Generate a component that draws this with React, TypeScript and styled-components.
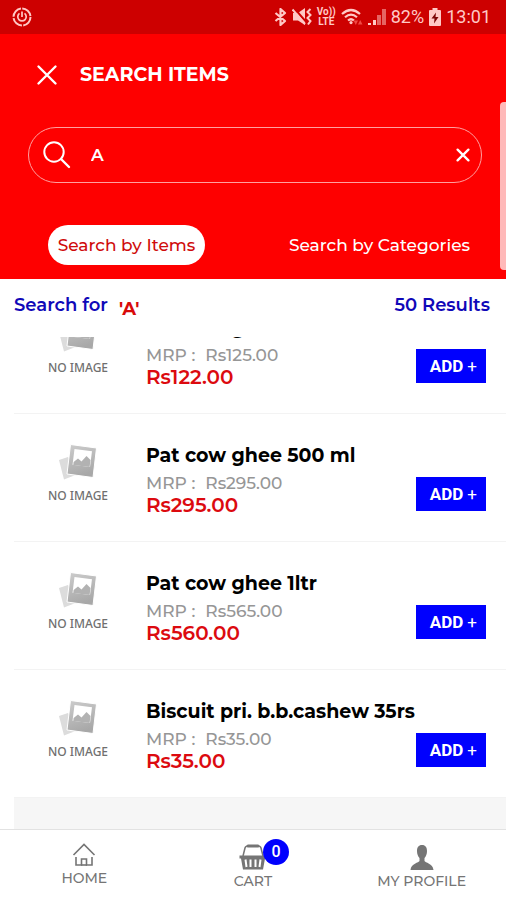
import React, { useState } from 'react';
import styled, { createGlobalStyle } from 'styled-components';

const GlobalStyle = createGlobalStyle`
  *, *::before, *::after { box-sizing: border-box; }
  html, body, #root { height: 100%; }
  body {
    margin: 0;
    background: #fff;
    color: #000;
    font-family: Montserrat, Inter, sans-serif;
  }
  button, input { font-family: inherit; }
`;

const Page = styled.div`
  position: relative;
  display: flex;
  flex-direction: column;
  height: 100%;
  overflow: hidden;
`;

const ScrollThumb = styled.div`
  position: absolute;
  top: 102px;
  right: 0;
  width: 6px;
  height: 168px;
  border-radius: 4px 0 0 4px;
  background: #ffb9b9;
`;

const StatusBar = styled.div`
  flex: none;
  display: flex;
  align-items: center;
  justify-content: space-between;
  height: 34px;
  padding: 0 15px 0 12px;
  background: #cd0000;
  color: #ffc9c6;
  font-family: Roboto, sans-serif;
  font-size: 18px;
  line-height: 24px;
`;

const StatusGroup = styled.div`
  display: flex;
  align-items: center;
  gap: 5px;
`;

const VoLte = styled.span`
  display: flex;
  flex-direction: column;
  align-items: center;
  font-size: 10px;
  font-weight: 700;
  line-height: 10px;
`;

const Header = styled.header`
  flex: none;
  padding: 29px 0 14px;
  background: #fe0000;
  color: #fff;
`;

const TitleRow = styled.div`
  display: flex;
  align-items: center;
  gap: 22px;
  padding: 0 36px;
`;

const IconButton = styled.button`
  display: flex;
  padding: 0;
  border: 0;
  background: none;
  color: inherit;
  cursor: pointer;
`;

const Title = styled.h1`
  margin: 0;
  font-size: 19px;
  font-weight: 700;
  line-height: 24px;
`;

const SearchBox = styled.form`
  display: flex;
  align-items: center;
  height: 56px;
  margin: 40px 24px 0 28px;
  padding: 0 11px 0 14px;
  border: 1px solid #ffa0a0;
  border-radius: 28px;
`;

const SearchInput = styled.input`
  flex: 1;
  min-width: 0;
  padding: 0 20px;
  border: 0;
  outline: 0;
  background: none;
  color: #fff;
  font-size: 17px;
  font-weight: 600;
  line-height: 24px;
`;

const Tabs = styled.div`
  display: grid;
  grid-template-columns: 1fr 1fr;
  justify-items: center;
  margin-top: 42px;
`;

const Tab = styled.button<{ $active: boolean }>`
  height: 40px;
  padding: 0 10px;
  border: 0;
  border-radius: 20px;
  background: ${(p) => (p.$active ? '#fff' : 'transparent')};
  color: ${(p) => (p.$active ? '#cf0b0b' : '#fff')};
  font-size: 17px;
  font-weight: 500;
  line-height: 24px;
  white-space: nowrap;
  cursor: pointer;
`;

const ResultBar = styled.div`
  flex: none;
  display: flex;
  justify-content: space-between;
  height: 58px;
  padding: 14px 16px 0 14px;
  color: #1008b8;
  font-size: 18px;
  font-weight: 600;
  line-height: 24px;
`;

const Query = styled.strong`
  display: inline-block;
  margin-left: 11px;
  padding-top: 4px;
  color: #d80a0a;
  font-weight: 700;
  vertical-align: top;
`;

const Viewport = styled.main`
  flex: 1;
  min-height: 0;
  padding-left: 14px;
  overflow: hidden;
`;

const ItemList = styled.ul`
  margin: -51px 0 0;
  padding: 0;
  list-style: none;
`;

const Item = styled.li`
  display: grid;
  grid-template-columns: 128px minmax(0, 1fr) auto;
  column-gap: 4px;
  padding: 28px 20px 25px 0;
  border-bottom: 1px solid #f3f3f3;
`;

const Thumb = styled.div`
  display: flex;
  flex-direction: column;
  align-items: center;
  gap: 8px;
  padding-top: 2px;
  color: #6f6f6f;
  font-family: 'Noto Sans', sans-serif;
  font-size: 12px;
  font-weight: 500;
  line-height: 16px;
`;

const ItemName = styled.h2`
  margin: 0 0 2px;
  font-size: 19px;
  font-weight: 700;
  line-height: 28px;
  white-space: nowrap;
`;

const Mrp = styled.p`
  display: flex;
  gap: 10px;
  margin: 0;
  color: #969696;
  font-size: 17px;
  font-weight: 500;
  line-height: 22px;
`;

const Price = styled.p`
  margin: 0;
  color: #dc0a0f;
  font-size: 20px;
  font-weight: 600;
  line-height: 22px;
`;

const AddButton = styled.button`
  align-self: end;
  height: 34px;
  margin-bottom: 5px;
  padding: 0 9px 0 14px;
  border: 0;
  background: #0000fe;
  color: #fff;
  font-family: Roboto, sans-serif;
  font-size: 17px;
  font-weight: 700;
  line-height: 24px;
  white-space: nowrap;
  cursor: pointer;
`;

const Plus = styled.span`
  margin-left: 4px;
  font-weight: 400;
`;

const ListEnd = styled.div`
  height: 100%;
  background: #f6f6f6;
`;

const BottomNav = styled.nav`
  flex: none;
  display: grid;
  grid-template-columns: 1fr 1fr 1fr;
  height: 71px;
  padding-top: 13px;
  border-top: 1px solid #e2e2e2;
  background: #fff;
`;

const NavLink = styled.a`
  display: flex;
  flex-direction: column;
  align-items: center;
  gap: 1px;
  color: #757575;
  font-size: 14px;
  font-weight: 500;
  line-height: 20px;
  text-decoration: none;
`;

const NavIcon = styled.span`
  position: relative;
  display: flex;
`;

const Badge = styled.span`
  position: absolute;
  top: -4px;
  left: 24px;
  width: 26px;
  height: 26px;
  border-radius: 50%;
  background: #0000fe;
  color: #fff;
  font-family: Roboto, sans-serif;
  font-size: 16px;
  line-height: 26px;
  text-align: center;
`;

const CrossIcon = ({ size, weight }: { size: number; weight: number }) => (
  <svg width={size} height={size} viewBox="0 0 22 22" fill="none" stroke="currentColor" strokeWidth={weight} strokeLinecap="round">
    <path d="M2.500 2.500 19.500 19.500M19.500 2.500 2.500 19.500" />
  </svg>
);

const SearchIcon = () => (
  <svg width="28" height="28" viewBox="0 0 28 28" fill="none" stroke="currentColor" strokeWidth="2" strokeLinecap="round">
    <circle cx="11" cy="11" r="9.700" />
    <path d="M18 18 26 26" strokeWidth="2.400" />
  </svg>
);

const PowerIcon = () => (
  <svg width="20" height="20" viewBox="0 0 20 20" fill="none" stroke="currentColor" strokeWidth="2">
    <circle cx="10" cy="10" r="8.500" strokeDasharray="12 1.350" />
    <path d="M7.500 6.400a4.200 4.200 0 1 0 5 0M10 4.500V10" strokeWidth="1.700" />
  </svg>
);

const BluetoothIcon = () => (
  <svg width="13" height="18" viewBox="0 0 13 18" fill="none" stroke="currentColor" strokeWidth="2.200" strokeLinejoin="round">
    <path d="M1.500 5 11 13 6.500 17V1L11 5 1.500 13" />
  </svg>
);

const MuteVibrateIcon = () => (
  <svg width="20" height="18" viewBox="0 0 20 18" fill="none" stroke="currentColor" strokeWidth="2">
    <path d="M1 5H6L13 0V17L6 12.500H1Z" fill="currentColor" stroke="none" />
    <path d="M2 0 15 15" stroke="#cd0000" strokeWidth="2" />
    <path d="M0.500 1.500 13 16" />
    <path d="M18.500 1 15.500 4 18.500 7 15.500 10 18.500 13 16 16.500" />
  </svg>
);

const WifiIcon = () => (
  <svg width="22" height="18" viewBox="0 0 22 18" fill="none" stroke="currentColor" strokeWidth="2.200">
    <path d="M1 6Q10 -2 19 6M4 9.300Q10 4 16 9.300M7 12.500Q10 10 13 12.500" />
    <circle cx="10" cy="14.600" r="1.600" fill="currentColor" stroke="none" />
    <path d="M12.500 12.500H17L14.800 17ZM17 16.500 19.200 12 21.500 16.500Z" fill="#ef4a45" stroke="none" />
  </svg>
);

const SignalIcon = () => (
  <svg width="18" height="18" viewBox="0 0 18 18" fill="currentColor">
    <path d="M0 15h3v2H0ZM5 12h3v5H5Z" />
    <path d="M9 7h4v10H9ZM14 1h4v16h-4Z" opacity=".5" />
  </svg>
);

const BatteryIcon = () => (
  <svg width="12" height="18" viewBox="0 0 12 18" fill="currentColor">
    <path d="M3.500 0h5v2H11a1 1 0 0 1 1 1v14a1 1 0 0 1-1 1H1a1 1 0 0 1-1-1V3a1 1 0 0 1 1-1h2.500Z" />
    <path d="M7 4.500 2.500 10.500H5.500L5 15.500 9.500 9H6.500Z" fill="#7c0505" />
  </svg>
);

const PhotoIcon = () => (
  <svg width="40" height="36" viewBox="0 0 40 36">
    <defs>
      <linearGradient id="frame" x1="0" y1="0" x2="0.300" y2="1">
        <stop offset="0" stopColor="#cdcdcd" />
        <stop offset="1" stopColor="#a8a8a8" />
      </linearGradient>
    </defs>
    <path d="M1 16 10 13 20 30 6 35.500Z" fill="#dcdcdc" />
    <path d="M12.500 0.500 38.500 4 35 33.500 9 30Z" fill="url(#frame)" stroke="#fff" strokeWidth="1" />
    <path d="M16.500 5 34 7.200 32 23 14.500 20.800Z" fill="#fff" />
    <path d="M15.300 20.900 15.600 18 20 14.500 23.500 17.500 28.500 12 32.500 16 31.600 23Z" fill="#b2b2b2" />
  </svg>
);

const HomeIcon = () => (
  <svg width="24" height="24" viewBox="0 0 24 24" fill="none" stroke="currentColor" strokeWidth="1.600">
    <path d="M1.500 12 12 1.500 22.500 12" />
    <path d="M4 14V22H9.500V16H14.500V22H20V14" />
    <path d="M9 22H15" />
  </svg>
);

const BasketIcon = () => (
  <svg width="28" height="27" viewBox="0 0 28 27" fill="none" stroke="currentColor">
    <path d="M4 13 6 5Q6.500 3 9 3H19Q21.500 3 22 5L24 13" strokeWidth="1.500" />
    <path d="M9 3H19" strokeWidth="3" strokeLinecap="round" />
    <path d="M0.500 12.500H27.500V15.500H26L24 26.500H4L2 15.500H0.500Z" fill="currentColor" stroke="none" />
    <path d="M6.500 16.500 7.500 24M11.500 16.500V24M16.500 16.500V24M21.500 16.500 20.500 24" stroke="#fff" strokeWidth="2" />
  </svg>
);

const PersonIcon = () => (
  <svg width="24" height="27" viewBox="0 0 24 27" fill="currentColor">
    <path d="M12 2C15.500 2 17 4.500 17 8C17 11 16 13.500 14.500 15V18C15 19.500 23 20.500 23.500 27H0.500C1 20.500 9 19.500 9.500 18V15C8 13.500 7 11 7 8C7 4.500 8.500 2 12 2Z" />
  </svg>
);

const items = [
  { name: 'Pat cow ghee 200 ml', mrp: '125.00', price: '122.00' },
  { name: 'Pat cow ghee 500 ml', mrp: '295.00', price: '295.00' },
  { name: 'Pat cow ghee 1ltr', mrp: '565.00', price: '560.00' },
  { name: 'Biscuit pri. b.b.cashew 35rs', mrp: '35.00', price: '35.00' },
];

const tabs = ['Search by Items', 'Search by Categories'];

export default function App() {
  const [query, setQuery] = useState('A');
  const [tab, setTab] = useState(tabs[0]);
  const [count, setCount] = useState(0);

  return (
    <>
      <GlobalStyle />
      <Page>
        <StatusBar>
          <PowerIcon />
          <StatusGroup>
            <BluetoothIcon />
            <MuteVibrateIcon />
            <VoLte>
              <span>Vo))</span>
              <span>LTE</span>
            </VoLte>
            <WifiIcon />
            <SignalIcon />
            <span>82%</span>
            <BatteryIcon />
            <span>13:01</span>
          </StatusGroup>
        </StatusBar>

        <Header>
          <TitleRow>
            <IconButton type="button" aria-label="Close">
              <CrossIcon size={22} weight={2.4} />
            </IconButton>
            <Title>SEARCH ITEMS</Title>
          </TitleRow>
          <SearchBox onSubmit={(e) => e.preventDefault()}>
            <SearchIcon />
            <SearchInput aria-label="Search items" value={query} onChange={(e) => setQuery(e.target.value)} />
            <IconButton type="button" aria-label="Clear search" onClick={() => setQuery('')}>
              <CrossIcon size={14} weight={3.6} />
            </IconButton>
          </SearchBox>
          <Tabs role="tablist">
            {tabs.map((t) => (
              <Tab key={t} type="button" role="tab" aria-selected={t === tab} $active={t === tab} onClick={() => setTab(t)}>
                {t}
              </Tab>
            ))}
          </Tabs>
        </Header>

        <ResultBar>
          <span>
            Search for<Query>'{query}'</Query>
          </span>
          <span>50 Results</span>
        </ResultBar>

        <Viewport>
          <ItemList>
            {items.map((item) => (
              <Item key={item.name}>
                <Thumb>
                  <PhotoIcon />
                  <span>NO IMAGE</span>
                </Thumb>
                <div>
                  <ItemName>{item.name}</ItemName>
                  <Mrp>
                    <span>MRP :</span>
                    <span>Rs{item.mrp}</span>
                  </Mrp>
                  <Price>Rs{item.price}</Price>
                </div>
                <AddButton type="button" onClick={() => setCount(count + 1)}>
                  ADD<Plus>+</Plus>
                </AddButton>
              </Item>
            ))}
          </ItemList>
          <ListEnd />
        </Viewport>

        <BottomNav>
          <NavLink href="#home">
            <NavIcon>
              <HomeIcon />
            </NavIcon>
            HOME
          </NavLink>
          <NavLink href="#cart">
            <NavIcon>
              <BasketIcon />
              <Badge>{count}</Badge>
            </NavIcon>
            CART
          </NavLink>
          <NavLink href="#profile">
            <NavIcon>
              <PersonIcon />
            </NavIcon>
            MY PROFILE
          </NavLink>
        </BottomNav>
        <ScrollThumb />
      </Page>
    </>
  );
}
